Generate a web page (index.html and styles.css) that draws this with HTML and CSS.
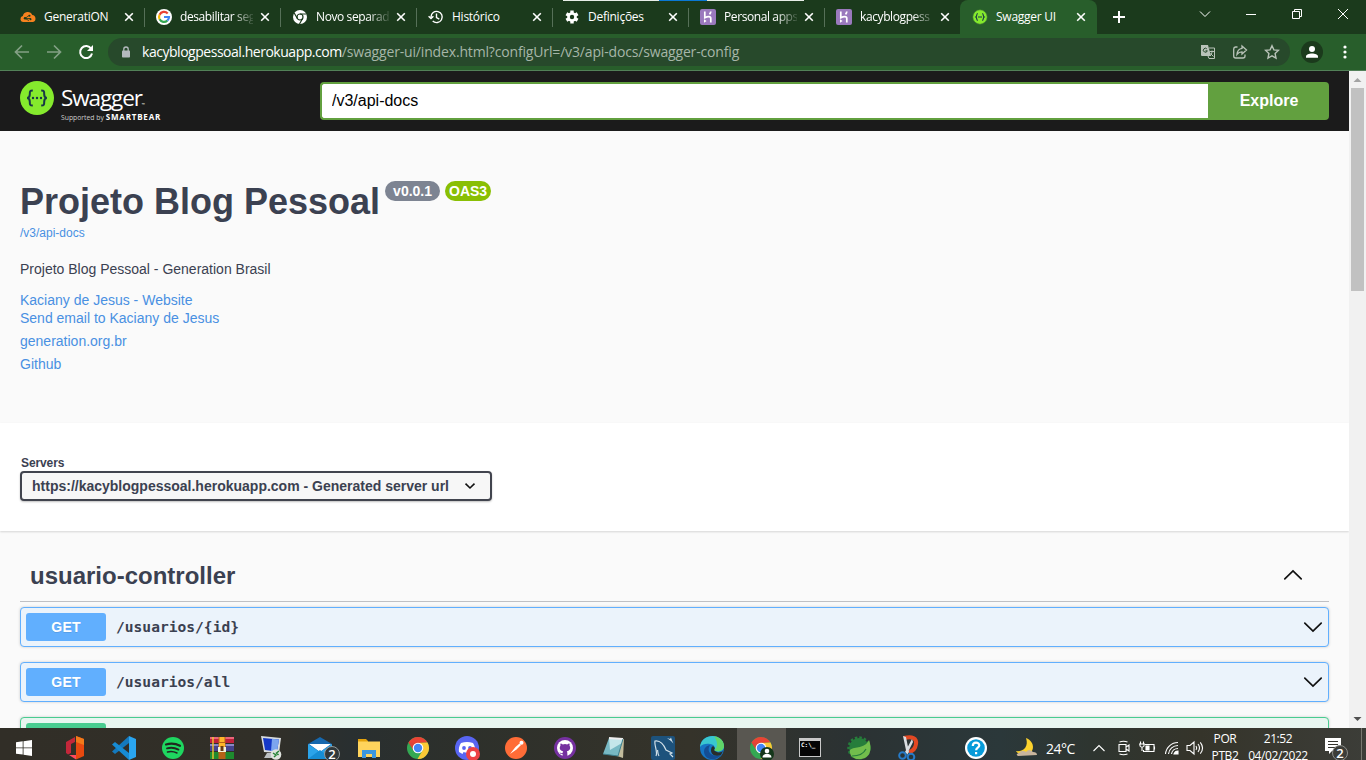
FILE: index.html
```
<!DOCTYPE html>
<html lang="pt-BR">
<head>
<meta charset="utf-8">
<title>Swagger UI</title>
<link rel="stylesheet" href="styles.css">
</head>
<body>
<svg class="defs" aria-hidden="true">
  <symbol id="x" viewBox="0 0 10 10"><path d="M1.2 1.2l7.6 7.6M8.800 1.200l-7.600 7.600" stroke="#fff" stroke-width="1.6" fill="none"/></symbol>
  <symbol id="heroku" viewBox="0 0 16 16"><rect width="16" height="16" rx="2" fill="#9a79bd"/><path d="M4.800 2.500v6.200c3-1.400 6-1.600 6 .8v4M10.800 2.500c0 1.200-.5 2-1.300 2.800" stroke="#fff" stroke-width="1.700" fill="none"/><path d="M4 10.200l2.600 1.800L4 13.800z" fill="#fff"/></symbol>
  <symbol id="chrome" viewBox="0 0 24 24"><circle cx="12" cy="12" r="11" fill="#34a853"/><path d="M2.500 6.500A11 11 0 0 1 21.500 6.500L12 7 8 14z" fill="#ea4335"/><path d="M21.500 6.500A11 11 0 0 1 11.500 23L16.500 14.500 12 7z" fill="#fbc936"/><path d="M2.500 6.500L7.800 15 12 7z" fill="#db4437"/><circle cx="12" cy="12" r="5.300" fill="#fff"/><circle cx="12" cy="12" r="4.200" fill="#4285f4"/></symbol>
  <symbol id="chev" viewBox="0 0 20 20"><path d="M1.800 6.200L10 14l8.200-7.800" stroke="#111" stroke-width="1.700" fill="none" stroke-linecap="round"/></symbol>
</svg>

<header class="tabstrip">
  <div class="tab"><svg class="fav" viewBox="0 0 16 16"><path d="M3 13a3 3 0 0 1-.2-5.900A5 5 0 0 1 12.300 6 3.600 3.600 0 0 1 13 13z" fill="#f6821f"/><path d="M5 9.500l4-3M5 9.500h6M5 9.500l4 2" stroke="#1b3a1c" stroke-width=".8"/><circle cx="5" cy="9.300" r="1.200" fill="#1b3a1c"/><circle cx="9.500" cy="6.800" r="1" fill="#1b3a1c"/><circle cx="10.500" cy="10.300" r="1" fill="#1b3a1c"/></svg><span class="name">GeneratiON</span><svg class="close"><use href="#x"/></svg></div>
  <div class="tab"><svg class="fav" viewBox="0 0 16 16"><circle cx="8" cy="8" r="8" fill="#fff"/><g fill="none" stroke-width="2.200"><path d="M11.700 4.400A5 5 0 0 0 3.600 5.700" stroke="#ea4335"/><path d="M3.600 5.700a5 5 0 0 0 0 4.600" stroke="#fbbc05"/><path d="M3.600 10.300a5 5 0 0 0 7.700 1.400" stroke="#34a853"/><path d="M11.300 11.700A5 5 0 0 0 13 8H8" stroke="#4285f4"/></g></svg><span class="name fade">desabilitar seg</span><svg class="close"><use href="#x"/></svg></div>
  <div class="tab"><svg class="fav" viewBox="0 0 16 16"><circle cx="8" cy="8" r="7" fill="#fff"/><circle cx="8" cy="8" r="3" fill="none" stroke="#1b3a1c" stroke-width="1.200"/><path d="M8 5h6.400M5.400 9.500L2.200 4M10.600 9.500L7.500 15" stroke="#1b3a1c" stroke-width="1.200"/></svg><span class="name fade">Novo separad</span><svg class="close"><use href="#x"/></svg></div>
  <div class="tab"><svg class="fav" viewBox="0 0 16 16" fill="none" stroke="#fff" stroke-width="1.400"><path d="M3 8a5.600 5.600 0 1 1 1.700 4M.6 7.200L3 9.500l2.400-2.300M8.500 4.500v4l2.800 1.600"/></svg><span class="name">Histórico</span><svg class="close"><use href="#x"/></svg></div>
  <div class="tab"><svg class="fav" viewBox="0 0 16 16"><g stroke="#fff" stroke-width="3.400"><path d="M8 1.500v13M2.400 4.750l11.200 6.500M13.600 4.750L2.400 11.250"/></g><circle cx="8" cy="8" r="4.800" fill="#fff"/><circle cx="8" cy="8" r="2.200" fill="#1b3a1c"/></svg><span class="name">Definições</span><svg class="close"><use href="#x"/></svg></div>
  <div class="tab"><svg class="fav"><use href="#heroku"/></svg><span class="name fade">Personal apps</span><svg class="close"><use href="#x"/></svg></div>
  <div class="tab nosep"><svg class="fav"><use href="#heroku"/></svg><span class="name fade">kacyblogpess</span><svg class="close"><use href="#x"/></svg></div>
  <div class="tab active"><svg class="fav" viewBox="0 0 16 16"><circle cx="8" cy="8" r="7.200" fill="#85ea2d" stroke="#3e7a30" stroke-width=".6"/><path d="M5.800 4.500c-1.500 0-.6 2.800-2 3.500 1.400.7.500 3.500 2 3.500M10.200 4.500c1.500 0 .6 2.800 2 3.500-1.400.7-.5 3.500-2 3.500M6 8h4" fill="none" stroke="#173647" stroke-width="1.100"/></svg><span class="name">Swagger UI</span><svg class="close"><use href="#x"/></svg></div>
  <svg class="plus" viewBox="0 0 12 12"><path d="M6 0v12M0 6h12" stroke="#fff" stroke-width="2"/></svg>
  <div class="winctl">
    <svg viewBox="0 0 12 12"><path d="M1 3.500l5 5 5-5"/></svg>
    <svg viewBox="0 0 12 12"><path d="M1 6.500h10"/></svg>
    <svg viewBox="0 0 12 12"><path d="M1.500 3.500h7v7h-7zM3.500 3.500v-2h7v7h-2"/></svg>
    <svg viewBox="0 0 12 12"><path d="M1 1l10 10M11 1L1 11"/></svg>
  </div>
  <div class="edge-line"></div>
</header>

<nav class="toolbar">
  <svg class="nav" viewBox="0 0 16 16"><path d="M15 8H2M8 1.500L1.500 8 8 14.500" stroke="#83a085"/></svg>
  <svg class="nav" viewBox="0 0 16 16"><path d="M1 8h13M8 1.500L14.500 8 8 14.500" stroke="#83a085"/></svg>
  <svg class="nav" viewBox="0 0 16 16"><path d="M13.200 4.800A6 6 0 1 0 14 9.500" stroke="#fff" stroke-width="2"/><path d="M15 1v6H9z" fill="#fff"/></svg>
  <div class="omnibox">
    <svg class="lock" viewBox="0 0 10 12"><path d="M2.800 5V3.200a2.200 2.200 0 0 1 4.400 0V5" fill="none" stroke="#b4b9be" stroke-width="1.300"/><rect x="1" y="4.500" width="8" height="7" rx=".8" fill="#b4b9be"/></svg>
    <span class="url"><b>kacyblogpessoal.herokuapp.com</b>/swagger-ui/index.html?configUrl=/v3/api-docs/swagger-config</span>
    <svg class="act" viewBox="0 0 16 16"><path d="M1 1h7l3 11H2a1 1 0 0 1-1-1z" fill="#b9c3b9"/><path d="M9 4h5.500v10.500H9L8 12M9.500 7.500h4.500M12 6.500v1c0 2-1 3.500-2 4.500M10.500 9.500l3 3" fill="none" stroke="#b9c3b9"/><path d="M6.800 4.800a2 2 0 1 0 .5 2H5.500" fill="none" stroke="#27492b"/></svg>
    <svg class="act" viewBox="0 0 16 16" fill="none" stroke="#b9c3b9" stroke-width="1.300"><path d="M5.500 3H3.500A2 2 0 0 0 1.700 5v7a2 2 0 0 0 2 2H11a2 2 0 0 0 2-2v-1.500"/><path d="M10 2l4.500 4L10 10V7.800c-2.500 0-3.700.7-5 2.600.3-3.300 1.700-5.700 5-6.100z"/></svg>
    <svg class="act" viewBox="0 0 16 16"><path d="M8 1.700l1.900 4.200 4.500.5-3.300 3.100.9 4.600-4-2.300-4 2.300.9-4.600L1.600 6.400l4.500-.5z" fill="none" stroke="#b9c3b9" stroke-width="1.400"/></svg>
  </div>
  <svg class="profile" viewBox="0 0 22 22"><circle cx="11" cy="11" r="11" fill="#1b3a1c"/><circle cx="11" cy="8" r="3" fill="#fff"/><path d="M5 16.800v-1.300c0-4 12-4 12 0v1.300z" fill="#fff"/></svg>
  <svg class="dots" viewBox="0 0 4 14"><g fill="#fff"><circle cx="2" cy="2" r="1.600"/><circle cx="2" cy="7" r="1.600"/><circle cx="2" cy="12" r="1.600"/></g></svg>
</nav>

<div class="viewport">
  <main class="page">
    <div class="topbar">
      <div class="logo">
        <svg class="mark" viewBox="0 0 34 34"><circle cx="17" cy="17" r="17" fill="#85ea2d"/><g fill="none" stroke="#173647" stroke-width="2"><path d="M12.800 9.500c-3 0-3 .7-3 3.800 0 2.500-.4 3.400-2.600 3.700 2.200.3 2.600 1.200 2.600 3.700 0 3.100 0 3.800 3 3.800M21.200 9.500c3 0 3 .7 3 3.800 0 2.500.4 3.400 2.600 3.700-2.200.3-2.600 1.200-2.600 3.700 0 3.100 0 3.800-3 3.800"/></g><g fill="#173647"><circle cx="13" cy="17" r="1.200"/><circle cx="17" cy="17" r="1.200"/><circle cx="21" cy="17" r="1.200"/></g></svg>
        <div class="brand"><div class="word">Swagger<i>™</i></div><div class="support">Supported by <b>SMARTBEAR</b></div></div>
      </div>
      <div class="search"><input class="field" type="text" value="/v3/api-docs"><button class="explore">Explore</button></div>
    </div>

    <section class="info">
      <div class="title-row"><h1>Projeto Blog Pessoal</h1><span class="pill">v0.0.1</span><span class="pill oas">OAS3</span></div>
      <a class="spec">/v3/api-docs</a>
      <p class="desc">Projeto Blog Pessoal - Generation Brasil</p>
      <a class="link tight">Kaciany de Jesus - Website</a>
      <a class="link">Send email to Kaciany de Jesus</a>
      <a class="link">generation.org.br</a>
      <a class="link">Github</a>
    </section>

    <section class="servers">
      <div class="label">Servers</div>
      <div class="select"><span>https://kacyblogpessoal.herokuapp.com - Generated server url</span><svg viewBox="0 0 12 12"><path d="M1.500 3.700L6 8l4.500-4.300" fill="none" stroke="#111" stroke-width="1.600"/></svg></div>
    </section>

    <section class="ops">
      <div class="tag"><h2>usuario-controller</h2><svg class="arrow up"><use href="#chev"/></svg></div>
      <div class="op get"><span class="method">GET</span><span class="path">/usuarios/{id}</span><svg class="arrow"><use href="#chev"/></svg></div>
      <div class="op get"><span class="method">GET</span><span class="path">/usuarios/all</span><svg class="arrow"><use href="#chev"/></svg></div>
      <div class="op post"><span class="method"></span></div>
    </section>
  </main>
  <div class="scrollbar"><svg viewBox="0 0 17 17"><path d="M4.500 11h8L8.500 7z" fill="#a3a3a3"/></svg><div class="thumb"></div><svg class="down" viewBox="0 0 17 17"><path d="M4.500 6h8l-4 4z" fill="#505050"/></svg></div>
</div>

<footer class="taskbar">
  <div class="start"><svg viewBox="0 0 16 16"><path d="M0 2.300l6.700-1v6.200H0zM7.500 1.200L16 0v7.500H7.500zM0 8.300h6.700v6.300L0 13.700zM7.500 8.300H16V16l-8.500-1.200z" fill="#fff"/></svg></div>
  <div class="app"><svg viewBox="0 0 24 24"><path d="M3 6l9-5v5L8 8v9l-3 1.500L3 17z" fill="#c4273a"/><path d="M13 0l8 3v17l-8 3.500z" fill="#e8490f"/><path d="M13 0l8 3v6l-8-3z" fill="#f27a1a"/><path d="M6 19h7v4.500z" fill="#ff4a5c"/></svg></div>
  <div class="app"><svg viewBox="0 0 24 24"><path d="M17 0l7 3v18l-7 3z" fill="#2aa5f0"/><path d="M17 0v7L3 18l-3-2.500z" fill="#1479bd"/><path d="M17 24v-7L3 6 0 8.500z" fill="#178bd3"/></svg></div>
  <div class="app"><svg viewBox="0 0 24 24"><circle cx="12" cy="12" r="11" fill="#1ed760"/><g fill="none" stroke="#20271f" stroke-linecap="round"><path d="M5 8.500c5-1.500 10-.8 14 1.300" stroke-width="2.200"/><path d="M6 12.400c4-1.200 8-.6 11.500 1.200" stroke-width="1.800"/><path d="M6.500 16c3.500-1 6.500-.5 9.500 1" stroke-width="1.500"/></g></svg></div>
  <div class="app"><svg viewBox="0 0 24 24"><path d="M0 1h24v6H0z" fill="#bf213b"/><path d="M0 1h24v2H0z" fill="#e9657a"/><path d="M0 8h24v7H0z" fill="#45438e"/><path d="M0 8h24v2H0z" fill="#8a87c5"/><path d="M0 16h24v7H0z" fill="#1e8a2e"/><path d="M3 1v22" stroke="#f2c62f" stroke-width="1.400"/><path d="M8.500 1h7v22h-7z" fill="#b86218"/><path d="M9.500 1h5v5h-5zM9 7h6v4H9z" fill="#ffb52a"/><path d="M8 11h8v5H8z" fill="#f5f2dc"/><path d="M10.500 10h3v5h-3z" fill="#6b3b12"/></svg></div>
  <div class="app"><svg viewBox="0 0 24 24"><path d="M2 0l20 2-2 15-15-1z" fill="#d9dde0"/><path d="M4 2l16 1.500-2 12L6 14z" fill="#1438c8"/><path d="M13 2.800l7 .7-2 12-6-.6z" fill="#7ca5ef"/><path d="M8 17h7v5H5z" fill="#bcc0c3"/><circle cx="17" cy="18.500" r="5.300" fill="#dfe3de"/><path d="M14 17l3 2-2 2M20 15l-2.500 2 2 2" stroke="#248335" fill="none" stroke-width="1.500"/></svg></div>
  <div class="app"><svg class="wide" viewBox="0 0 34 24"><path d="M5 8L17 1l12 7v15H5z" fill="#1668ae"/><path d="M6 8h22l-11 8z" fill="#fff"/><path d="M5 8l12 8 12-8v15H5z" fill="#2ba4ea"/><path d="M5 23l12-9 12 9z" fill="#168dd4"/><circle cx="29" cy="18" r="7.500" fill="#30383a" stroke="#92999b"/><text x="29" y="22.500" text-anchor="middle">2</text></svg></div>
  <div class="app"><svg viewBox="0 0 24 24"><path d="M1 3h8l2 2v4H1z" fill="#e5a30c"/><path d="M1 5.500h22V21H1z" fill="#ffd45c"/><path d="M5 22v-8h14v8h-4v-4H9v4z" fill="#3b97df"/></svg></div>
  <div class="app"><svg viewBox="0 0 24 24"><use href="#chrome"/></svg></div>
  <div class="app"><svg viewBox="0 0 24 24"><circle cx="12" cy="12" r="12" fill="#5865f2"/><path d="M6 7q6-2 12 0c2 3 2.500 6 2 9l-3.500 2-1-2q-3.500 1-7 0l-1 2L4 16c-.5-3 0-6 2-9z" fill="#fff"/><g fill="#5865f2"><circle cx="9" cy="12" r="1.900"/><circle cx="15" cy="12" r="1.900"/></g><circle cx="18" cy="18" r="7" fill="#ed4245"/><circle cx="18" cy="18" r="3" fill="#fff"/></svg></div>
  <div class="app"><svg viewBox="0 0 24 24"><circle cx="12" cy="12" r="11" fill="#ff6c37"/><path d="M6 18l5.500-7 4-3.500 1.500 1.500-4.500 4.500z" fill="#fff"/><circle cx="17.500" cy="6.700" r="2" fill="#fff"/></svg></div>
  <div class="app"><svg viewBox="0 0 24 24"><circle cx="12" cy="12" r="11" fill="#7530a0"/><circle cx="12" cy="12" r="8" fill="#fff"/><path d="M12 8q1.300 0 2.200.4c1-.7 1.800-.9 2.200-.8q.5 1.200.1 2.200c1.600 2.200.5 5-2.700 5.500.5.500.6 1.200.6 4.700h-4.800v-2c-2 .4-2.500-.8-3.100-1.600 1.300 0 1.500 1.200 3.100.6q.1-1 .6-1.600C7 15 5.900 12 7.500 9.800q-.4-1 .1-2.200c.4-.1 1.200.1 2.200.8Q10.700 8 12 8z" fill="#7530a0"/></svg></div>
  <div class="app"><svg viewBox="0 0 24 24"><path d="M7 2l15 1-1 19-6-2z" fill="#c2bc9d"/><path d="M7 2l14 1-5 17L1 18z" fill="#78b9c4"/><path d="M7 2l14 1-1 4L8 14z" fill="#c5e6ea"/><path d="M7 2l14 1" stroke="#eee" stroke-width="2"/><path d="M1 18l15 2 5-17" stroke="#3e7e8c" fill="none"/></svg></div>
  <div class="app"><svg viewBox="0 0 24 24"><rect width="24" height="24" rx="2" fill="#1d527c"/><path d="M5 20c2-4-2-11-1-15 5-1 9 4 11 9l6 3-2 1 3 3M8 20c-1.500-2-1-4-1.500-6" fill="none" stroke="#d3e1e9" stroke-width="1.200"/><path d="M16 2l3 1 1-1.500 1 3 1.500 3L20 5z" fill="#d3e1e9"/></svg></div>
  <div class="app"><svg viewBox="0 0 24 24"><circle cx="12" cy="12" r="12" fill="#1675c4"/><path d="M0 11C1-3 23-4 24 10c0 5-6 7-10 4 2-2 0-6-4-6-4-.5-8 0-10 3z" fill="#39c7d0"/><path d="M14 .5C20 1 24 5 24 10c0 5-6 7-10 4 4-2 4-9 0-13.500z" fill="#60d568"/><path d="M10 9c-4 6 1 13 11 10-4 6-16 6-17-3 0-4 2-6 6-7z" fill="#144d94"/><path d="M14 14c2 3 7 3 9 1l-2 4c-7 2-10-1-10-5q0-3 2-4 3 2 1 4z" fill="#292d2a"/></svg></div>
  <div class="app current"><svg viewBox="0 0 24 24"><use href="#chrome"/><circle cx="18" cy="18" r="7" fill="#15371b"/><circle cx="18" cy="15" r="2.300" fill="#fff"/><path d="M13.500 21.500c0-5 9-5 9 0z" fill="#fff"/></svg></div>
  <div class="app"><svg viewBox="0 0 24 24"><path d="M1 2h22v19H1z" fill="#c9c9c9"/><path d="M2 5h20v15H2z" fill="#050505"/><text class="cmd" x="3" y="11">C:\_</text></svg></div>
  <div class="app"><svg viewBox="0 0 24 24"><circle cx="12" cy="12" r="10" fill="#267d3b"/><circle cx="12" cy="12" r="10.500" fill="none" stroke="#267d3b" stroke-width="2.500" stroke-dasharray="2.500 2"/><path d="M22 4c3 8 2 18-8 19C6 24 2 19 3 14c5-4 15-1 19-10z" fill="#72bd4c"/><path d="M5 20c8 0 12-3 14-7" stroke="#267d3b" stroke-width="1.200" fill="none"/></svg></div>
  <div class="app"><svg viewBox="0 0 24 24"><path d="M8 2c8-2 13 0 12 6-.5 4-3 7-7 8" fill="none" stroke="#e34822" stroke-width="4"/><path d="M7 0l3 1 3 15-2 3zM16 3l1 3-6 12-2-2z" fill="#d9dde1"/><circle cx="6.500" cy="19.500" r="3.300" fill="none" stroke="#267bc8" stroke-width="2"/><circle cx="15" cy="21" r="3.300" fill="none" stroke="#267bc8" stroke-width="2"/></svg></div>
  <div class="tray">
    <svg class="help" viewBox="0 0 24 24"><circle cx="12" cy="12" r="11" fill="#fff"/><circle cx="12" cy="12" r="8.800" fill="#079bd9"/><path d="M8.800 10c0-4.500 6.500-4.300 6.500-.5 0 2.200-3.200 2.300-3.200 4.800M12.100 16v2.200" fill="none" stroke="#fff" stroke-width="2.200"/></svg>
    <svg class="moon" viewBox="0 0 24 24"><path d="M12 2c10 4 9 16-1 17-4 0-7-1-9-4 7 1 13-4 10-13z" fill="#fcd22d"/><path d="M4 20q-3-2 1-3 3-4 7-1 3-4 7 0 4 0 4 3z" fill="#c9b59d"/></svg>
    <span class="temp">24°C</span>
    <svg class="t-up" viewBox="0 0 16 16"><path d="M2.500 11L8 5.500l5.500 5.500"/></svg>
    <svg class="t-meet" viewBox="0 0 16 16"><path d="M3 4.500h7v7H3zM10 7l3-2v6l-3-2M3.500 2q4-1.500 8 0M3.500 14q4 1.500 8 0"/></svg>
    <svg class="t-bat" viewBox="0 0 18 16"><path d="M7 4.500h9v7H5.500V10M16.500 6.500v3M1 4h6M2.500 4V1.500M5.500 4V1.500M2 4v2q2 2.500 4 0V4M4 7v4"/><path d="M8 6h3v4H8z" fill="#fff"/></svg>
    <svg class="t-wifi" viewBox="0 0 16 16"><path d="M1.500 14A12.500 12.500 0 0 1 14 2.500M4.500 14A9.500 9.500 0 0 1 14 5.500M7.500 14A6.500 6.500 0 0 1 14 8.500"/><path d="M10 14q1-3 4-3v3z" fill="#fff"/></svg>
    <svg class="t-vol" viewBox="0 0 18 16"><path d="M1 5.500h3L8 2v12l-4-3.500H1zM10 6q1.500 2 0 4M12 4q3 4 0 8M14.300 2.300q4.500 5.700 0 11.400"/></svg>
    <div class="two lang"><span>POR</span><span>PTB2</span></div>
    <div class="two clock"><span>21:52</span><span>04/02/2022</span></div>
    <svg class="note" viewBox="0 0 28 28"><path d="M1 2h16v13H8l-3 3v-3H1z" fill="#fff"/><path d="M4 5.500h10M4 8.500h10M4 11.500h7" stroke="#35352e"/><circle cx="16" cy="17" r="7.500" fill="#3c3d38" stroke="#8d8e8a"/><text x="16" y="21.500" text-anchor="middle">2</text></svg>
    <div class="desk"></div>
  </div>
</footer>
</body>
</html>
```
FILE: styles.css
```
* { box-sizing: border-box; }
body { margin: 0; width: 1366px; height: 760px; overflow: hidden; display: flex; flex-direction: column; background: #fafafa; font-family: "Liberation Sans", Arial, sans-serif; color: #3b4151; }
svg { display: block; flex: none; overflow: visible; }
.defs { position: absolute; width: 0; height: 0; }

.tabstrip { position: relative; flex: none; height: 34px; display: flex; background: #1b3a1c; padding-left: 8px; font: 12px/18px "Open Sans", "Noto Sans", sans-serif; color: #fff; }
.edge-line { position: absolute; left: 563px; top: 0; width: 241px; height: 1px; background: linear-gradient(90deg, #e8eee8 96px, #0a78d4 96px 144px, #e8eee8 144px); }
.tab { position: relative; width: 136px; height: 34px; padding: 0 10px 0 12px; display: flex; align-items: center; }
.tab::after { content: ""; position: absolute; right: -1px; top: 8px; width: 1px; height: 19px; background: #567058; }
.tab.nosep::after, .tab.active::after { display: none; }
.fav { width: 16px; height: 16px; }
.name { width: 73px; margin-left: 8px; overflow: hidden; white-space: nowrap; letter-spacing: -.25px; }
.fade { letter-spacing: -.4px; -webkit-mask-image: linear-gradient(90deg, #000 52px, transparent 76px); mask-image: linear-gradient(90deg, #000 52px, transparent 76px); }
.close { width: 10px; height: 10px; margin-left: auto; }
.tab.active { width: 137px; background: #285e2b; border-radius: 8px 8px 0 0; }
.tab.active .close { margin-right: 1px; }
.plus { width: 12px; height: 12px; margin: 11px 0 0 16px; }
.winctl { display: flex; gap: 34px; margin: 8px 17px 0 auto; }
.winctl svg { width: 12px; height: 12px; fill: none; stroke: #fff; stroke-width: 1; }

.toolbar { flex: none; height: 37px; display: flex; align-items: center; padding: 0 19px 0 14px; background: #285e2b; border-bottom: 1px solid #528058; }
.nav { width: 16px; height: 16px; margin-right: 16px; fill: none; stroke-width: 1.7; }
.omnibox { flex: 1; height: 28px; border-radius: 14px; background: #27492b; display: flex; align-items: center; padding: 0 10px 0 13px; margin-left: -2px; }
.lock { width: 10px; height: 12px; }
.url { flex: 1; margin-left: 11px; font: 14px/20px "Open Sans", "Noto Sans", sans-serif; letter-spacing: -.16px; color: #a6b6a8; white-space: nowrap; }
.url b { font-weight: 400; letter-spacing: -.47px; color: #fff; }
.act { width: 16px; height: 16px; margin-left: 16px; }
.profile { width: 22px; height: 22px; margin: 0 20px 0 11px; }
.dots { width: 4px; height: 14px; }

.viewport { flex: none; height: 657px; display: flex; overflow: hidden; }
.page { width: 1349px; background: #fafafa; }
.topbar { height: 60px; padding: 0 20px; display: flex; align-items: center; background: #1b1b1b; }
.logo { width: 300px; display: flex; height: 40px; }
.mark { width: 34px; height: 34px; }
.brand { margin-left: 7px; color: #fff; font-family: "Open Sans", sans-serif; }
.word { height: 29px; font-size: 22.500px; font-weight: 400; line-height: 30px; margin-top: 2px; letter-spacing: -1.1px; }
.word i { font-size: 4px; font-style: normal; }
.support { display: flex; align-items: baseline; gap: 2px; height: 9px; font-size: 6.800px; line-height: 9px; color: #ccc; white-space: nowrap; }
.support b { font-size: 8px; line-height: 9px; color: #fff; letter-spacing: .8px; }
.search { flex: 1; display: flex; height: 38px; }
.field { flex: 1; border: 2px solid #62a03f; border-right: 0; border-radius: 4px 0 0 4px; padding: 0 10px; font: 16px "Liberation Sans", sans-serif; color: #000; background: #fff; outline: none; }
.explore { width: 121px; border: 0; border-radius: 0 4px 4px 0; background: #62a03f; color: #fff; font: bold 16px "Liberation Sans", sans-serif; padding: 0 0 0 1px; }

.info { height: 292px; padding: 50px 20px 0; }
.title-row { display: flex; align-items: flex-start; height: 42px; }
h1 { margin: 0; font-size: 36px; line-height: 41px; white-space: nowrap; }
.pill { height: 20px; padding: 0 8px; margin-left: 5px; border-radius: 10px; background: #7d8492; color: #fff; font: bold 14px/20px "Liberation Sans", sans-serif; }
.oas { background: #89bf04; padding: 0 4px; }
.spec { display: block; height: 20px; font-size: 12px; line-height: 21px; color: #4990e2; }
.desc { margin: 17px 0 13px; font-size: 14px; line-height: 18px; }
.link { display: block; font-size: 14px; line-height: 18px; margin-bottom: 5px; color: #4990e2; }
.link.tight { margin-bottom: 0; }

.servers { height: 108px; padding: 33px 20px 0; background: #fff; box-shadow: 0 1px 2px rgba(0,0,0,.15); }
.label { font: bold 12px/14px "Liberation Sans", sans-serif; padding-left: 1px; margin-bottom: 1px; letter-spacing: -.1px; }
.select { width: 472px; height: 30px; border: 2px solid #41444e; border-radius: 4px; background: #f7f7f7; box-shadow: 0 1px 2px rgba(0,0,0,.25); display: flex; align-items: center; padding: 0 14px 0 10px; font: bold 14px "Liberation Sans", sans-serif; justify-content: space-between; }
.select svg { width: 12px; height: 12px; }

.ops { padding: 20px 20px 0; }
.tag { height: 51px; border-bottom: 1px solid #bfc0c4; margin-bottom: 5px; display: flex; align-items: center; justify-content: space-between; padding: 0 26px 2px 10px; }
h2 { margin: 2px 0 0; font-size: 24px; line-height: 28px; }
.arrow { width: 20px; height: 20px; }
.up { transform: rotate(180deg); }
.op { height: 40px; margin-bottom: 15px; padding: 0 5px; border: 1px solid #61affe; border-radius: 4px; background: #ebf3fb; box-shadow: 0 0 3px rgba(0,0,0,.19); display: flex; align-items: center; }
.method { width: 80px; height: 28px; border-radius: 3px; background: #61affe; color: #fff; text-align: center; font: bold 14px/28px "Liberation Sans", sans-serif; letter-spacing: .2px; text-shadow: 0 1px 0 rgba(0,0,0,.1); }
.path { flex: 1; padding-left: 10px; font: bold 14.6px/20px "DejaVu Sans Mono", monospace; }
.post { border-color: #49cc90; background: #e8f6f0; }
.post .method { background: #49cc90; }

.scrollbar { width: 17px; background: #f1f1f1; display: flex; flex-direction: column; }
.scrollbar svg { width: 17px; height: 17px; }
.thumb { width: 13px; height: 203px; margin-left: 2px; background: #c1c1c1; }
.scrollbar .down { margin-top: auto; }

.taskbar { flex: none; height: 32px; overflow: hidden; display: flex; background: linear-gradient(90deg, #312e27 0, #312f28 270px, #292f30 350px, #2d302b 460px, #35332a 690px, #2b3233 850px, #2b383a 1000px, #2e3530 1090px, #35342a 1200px, #3c3d38 1366px); color: #fff; font: 12px/15px "Open Sans", "Noto Sans", sans-serif; }
.start { width: 50.500px; padding: 12px 0 0 16px; }
.start svg { width: 16px; height: 16px; }
.app { flex: none; width: 49px; height: 40px; display: flex; align-items: center; justify-content: center; }
.app svg { width: 24px; height: 24px; }
.app .wide { width: 34px; }
.current { background: #595751; }
.taskbar text { font: 600 13px "Open Sans", sans-serif; fill: #fff; }
.taskbar text.cmd { font: bold 6px "DejaVu Sans Mono", monospace; }
.tray { flex: 1; display: flex; align-items: center; height: 40px; padding-left: 31.500px; }
.help, .moon { width: 24px; height: 24px; }
.moon { margin-left: 26px; }
.temp { width: 30px; margin-left: 8px; font-size: 14px; letter-spacing: -.5px; white-space: nowrap; }
.tray > [class^="t-"] { width: 16px; height: 16px; fill: none; stroke: #fff; stroke-width: 1.100; }
.tray > .t-up { margin-left: 15px; }
.tray > .t-meet { margin-left: 9px; }
.tray > .t-bat { margin-left: 6px; width: 18px; }
.tray > .t-wifi { margin-left: 8px; }
.tray > .t-vol { margin-left: 6px; width: 18px; }
.two { display: flex; flex-direction: column; align-items: center; gap: 2px; letter-spacing: -.4px; margin-top: -3px; }
.lang { width: 30px; margin-left: 6px; }
.clock { width: 62px; margin-left: 7px; }
.note { width: 28px; height: 28px; margin: 4px 0 0 15px; }
.desk { width: 1px; height: 40px; margin-left: auto; margin-right: 4px; background: #777870; }
```
